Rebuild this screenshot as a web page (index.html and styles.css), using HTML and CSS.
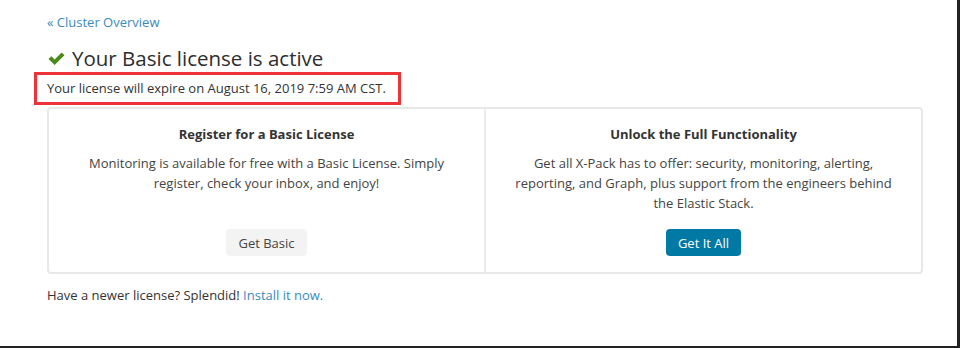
FILE: index.html
```html
<!DOCTYPE html>
<html>
<head>
<meta charset="utf-8">
<link rel="stylesheet" href="styles.css">
</head>
<body>
<div class="frame">
  <div class="page">
    <a class="back" href="#">« Cluster Overview</a>
    <h1 class="title"><svg class="check" viewBox="0 0 20 16" width="19" height="15"><path d="M1.5 8.5 L4.5 5.5 L8 9 L15.5 1.5 L18.5 4.5 L8 15 Z" fill="#4a8a1a"/></svg>Your Basic license is active</h1>
    <div class="expire-box">Your license will expire on August 16, 2019 7:59 AM CST.</div>
    <div class="card">
      <div class="panel">
        <h2 class="panel-title">Register for a Basic License</h2>
        <p class="panel-text">Monitoring is available for free with a Basic License. Simply register, check your inbox, and enjoy!</p>
        <button class="btn btn-basic">Get Basic</button>
      </div>
      <div class="panel">
        <h2 class="panel-title">Unlock the Full Functionality</h2>
        <p class="panel-text">Get all X-Pack has to offer: security, monitoring, alerting, reporting, and Graph, plus support from the engineers behind the Elastic Stack.</p>
        <button class="btn btn-primary">Get It All</button>
      </div>
    </div>
    <p class="footer">Have a newer license? Splendid! <a href="#">Install it now.</a></p>
  </div>
</div>
</body>
</html>
```

FILE: styles.css
```css
* { box-sizing: border-box; }
html, body { margin: 0; padding: 0; }
body {
  width: 960px;
  height: 348px;
  background: #fff;
  font-family: "Open Sans", "Noto Sans", sans-serif;
  color: #333;
  overflow: hidden;
}
.frame {
  width: 960px;
  height: 348px;
  border-right: 3px solid #222;
  border-bottom: 2px solid #222;
}
.page {
  padding: 13px 0 0 47px;
  width: 923px;
}
.back {
  display: block;
  font-size: 13px;
  line-height: 18px;
  color: #3a8bbb;
  text-decoration: none;
}
.title {
  margin: 13px 0 0 0;
  font-size: 20.5px;
  font-weight: 400;
  line-height: 28px;
  color: #2d2d2d;
  display: flex;
  align-items: center;
}
.check { margin-right: 6px; margin-top: 1px; }
.expire-box {
  margin: 0 0 0 -13px;
  width: 367px;
  height: 33px;
  border: 3px solid #ee3338;
  padding: 0 0 0 10px;
  font-size: 13px;
  line-height: 27px;
  color: #333;
}
.card {
  margin-top: 2px;
  display: flex;
  border: 2px solid #e8e8e8;
  border-radius: 4px;
  height: 167px;
}
.panel {
  flex: 1;
  display: flex;
  flex-direction: column;
  align-items: center;
  text-align: center;
  padding: 15px 28px 16px;
}
.panel + .panel { border-left: 2px solid #ececec; }
.panel-title {
  margin: 0;
  font-size: 13px;
  font-weight: 700;
  line-height: 20px;
  color: #333;
}
.panel-text {
  margin: 9px 0 0;
  font-size: 13px;
  line-height: 20px;
  color: #444;
}
.btn {
  margin-top: auto;
  font-family: inherit;
  font-size: 13px;
  border: none;
  border-radius: 4px;
  height: 27px;
  padding: 0 12px;
}
.btn-basic { background: #f3f3f3; color: #444; }
.btn-primary { background: #0079a5; color: #fff; }
.footer {
  margin: 12px 0 0;
  font-size: 13px;
  line-height: 18px;
  color: #333;
}
.footer a { color: #3a8bbb; text-decoration: none; }
```
